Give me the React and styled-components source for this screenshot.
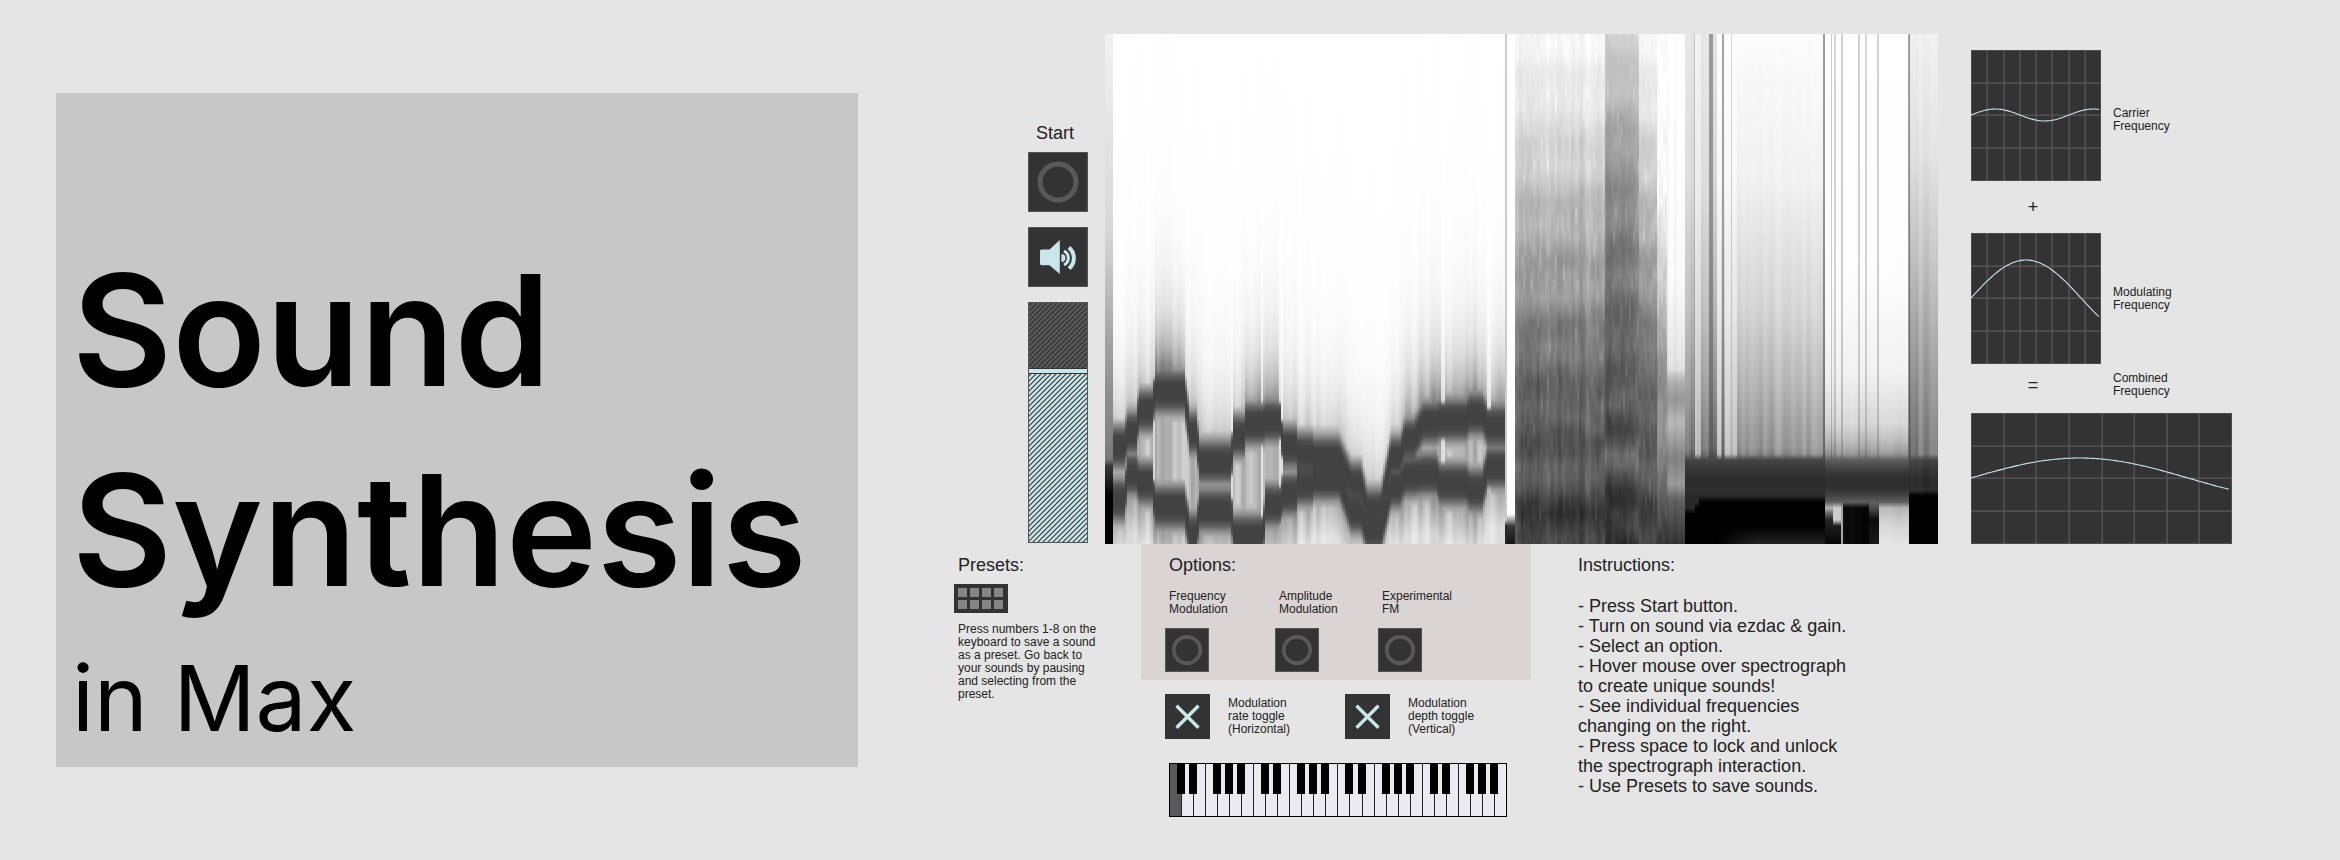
import React, { useMemo, useState } from "react";
import styled, { createGlobalStyle, css } from "styled-components";

const GlobalStyle = createGlobalStyle`
  *, *::before, *::after { box-sizing: border-box; }
  body {
    margin: 0;
    background: #e5e5e5;
    color: #222;
    font-family: "Liberation Sans", Arial, Helvetica, sans-serif;
  }
  h1, h2, p, ul { margin: 0; padding: 0; }
  button { padding: 0; border: 0; font: inherit; cursor: pointer; }
`;

const dark = "#333";
const ring = "#595959";
const accent = "#c9e6ea";

/* ---------- page ---------- */

const Page = styled.main`
  display: grid;
  grid-template-columns: minmax(0, 802fr) minmax(0, 1278fr);
  column-gap: 96px;
  align-items: start;
  padding: 34px 108px 34px 56px;
`;

const TitlePanel = styled.header`
  margin-top: 59px;
  padding: 137px 0 0 16px;
  background: #c7c7c7;
  color: #000;
  font-family: Inter, "Open Sans", sans-serif;
`;

const Title = styled.h1`
  font-size: 154px;
  line-height: 200px;
  font-weight: 600;
`;

const Subtitle = styled.p`
  font-size: 91px;
  line-height: 137px;
`;

const Patch = styled.div`
  display: flex;
  flex-direction: column;
`;

const TopRow = styled.div`
  display: flex;
`;

const BottomRow = styled.div`
  display: flex;
  align-items: flex-start;
`;

const Heading = styled.h2`
  font-size: 18px;
  line-height: 20px;
  font-weight: 400;
`;

const smallText = css`
  font-size: 12px;
  line-height: 13px;
`;

/* ---------- start, dac and gain ---------- */

const Controls = styled.div`
  flex: none;
  width: 134px;
  margin-right: 17px;
  padding-top: 89px;
  display: flex;
  flex-direction: column;
  align-items: flex-end;
  gap: 15px;
`;

const StartGroup = styled.div`
  width: 60px;
  display: flex;
  flex-direction: column;
  align-items: center;
  gap: 9px;
`;

const StartLabel = styled.label`
  font-size: 18px;
  line-height: 20px;
  padding-right: 6px;
`;

const Pad = styled.button`
  display: block;
  width: ${(p) => p.$size}px;
  height: ${(p) => p.$size}px;
  background: ${dark};
  outline: 1px solid #8886;
  outline-offset: -1px;

  svg { display: block; width: 100%; height: 100%; }
`;

const Gain = styled.div`
  position: relative;
  width: 60px;
  height: 241px;

  svg { display: block; width: 100%; height: 100%; }
`;

const GainInput = styled.input`
  position: absolute;
  inset: 0;
  width: 100%;
  height: 100%;
  margin: 0;
  opacity: 0;
  writing-mode: vertical-lr;
  direction: rtl;
`;

function Bang({ size, id, label }) {
  return (
    <Pad type="button" $size={size} id={id} aria-label={label}>
      <svg viewBox="0 0 60 60" aria-hidden="true">
        <circle cx="30" cy="30" r="18" fill="none" stroke={ring} strokeWidth="5" />
      </svg>
    </Pad>
  );
}

function Dac() {
  return (
    <Pad type="button" $size={60} aria-label="Sound on or off">
      <svg viewBox="0 0 60 60" aria-hidden="true">
        <path d="M13.5 22.4 H21.5 L31.8 13 V47 L21.5 38.2 H13.5 Q12 38.2 12 36.5 V24 Q12 22.4 13.5 22.4 Z" fill={accent} />
        <path d="M33.4 27 A4 4 0 0 1 33.4 35 Z" fill={accent} />
        <path d="M36 24 A7.8 7.8 0 0 1 36 38" fill="none" stroke={accent} strokeWidth="3" />
        <path d="M41 20.4 A14 14 0 0 1 41 41.6" fill="none" stroke={accent} strokeWidth="4" />
      </svg>
    </Pad>
  );
}

function GainSlider() {
  const [value, setValue] = useState(72);
  const top = Math.round(241 * (1 - value / 100)) - 1;
  return (
    <Gain>
      <svg viewBox="0 0 60 241" aria-hidden="true">
        <defs>
          <pattern id="hatchOff" width="5" height="5" patternUnits="userSpaceOnUse">
            <rect width="5" height="5" fill="#5b5b5b" />
            <path d="M-1 1 L1 -1 M0 5 L5 0 M4 6 L6 4" stroke="#333" strokeWidth="1.3" />
          </pattern>
          <pattern id="hatchOn" width="5" height="5" patternUnits="userSpaceOnUse">
            <rect width="5" height="5" fill={accent} />
            <path d="M-1 1 L1 -1 M0 5 L5 0 M4 6 L6 4" stroke="#3a3a3a" strokeWidth="1.2" />
          </pattern>
        </defs>
        <rect width="60" height="241" fill="url(#hatchOff)" />
        <rect y={top} width="60" height={241 - top} fill="url(#hatchOn)" />
        <rect y={top} width="60" height="6" fill={dark} />
        <rect y={top + 1} width="60" height="4" fill={accent} />
        <rect x=".5" y=".5" width="59" height="240" fill="none" stroke="#555" />
      </svg>
      <GainInput
        type="range"
        aria-label="Gain"
        min="0"
        max="100"
        value={value}
        onChange={(e) => setValue(Number(e.target.value))}
      />
    </Gain>
  );
}

/* ---------- spectrogram ---------- */

const SpectrogramFrame = styled.div`
  flex: 1;
  min-width: 0;
  height: 510px;
  background: #fff;

  svg { display: block; width: 100%; height: 100%; }
`;

const W = 833;
const H = 510;
const ROW = 12;
const COL = 2;

// [from, to, centre of the upper voice, centre of the lower voice]
const VOICES = [
  [8, 19, 413, 466], [21, 30, 399, 440], [33, 46, 377, 449],
  [49, 78, 358, 473], [84, 91, 399, 500], [93, 125, 428, 476], [128, 138, 402, 502],
  [140, 157, 390, 502], [160, 174, 387, 471], [177, 190, 413, 460], [192, 206, 420, 450],
  [208, 233, 424, 445], [245, 255, 450, 478],
  [261, 275, 476, 497], [285, 294, 424, 453], [299, 308, 406, 442], [317, 331, 389, 440],
  [333, 361, 386, 450], [363, 376, 380, 456], [382, 400, 392, 433],
];

// Bright gaps between partials above the voices.
const GAPS = [[47, 50], [125, 127], [155, 158], [174, 177], [336, 340], [382, 385]];

const hash = (a, b = 0) => {
  const s = Math.sin(a * 127.1 + b * 311.7 + 17.3) * 43758.5453;
  return s - Math.floor(s);
};
const mix = (a, b, t) => a + (b - a) * t;
const clamp = (v) => Math.max(0, Math.min(1, v));
const ramp = (stops, y) => {
  for (let i = 1; i < stops.length; i++) {
    if (y <= stops[i][0]) {
      const [y0, v0] = stops[i - 1];
      const [y1, v1] = stops[i];
      return mix(v0, v1, clamp((y - y0) / (y1 - y0 || 1)));
    }
  }
  return stops[stops.length - 1][1];
};
const within = (x, a, b) => x >= a && x < b;
const soft = (x) => (hash(x - 2) + 2 * hash(x) + hash(x + 2)) / 4;

function voicesAt(x) {
  for (let i = 0; i < VOICES.length; i++) {
    const [a, b, u, l] = VOICES[i];
    if (x < a) {
      const p = VOICES[i - 1];
      const t = clamp((x - p[1]) / (a - p[1]));
      return [mix(p[2], u, t), mix(p[3], l, t)];
    }
    if (x <= b) return [u, l];
  }
  return [392, 433];
}

const BAND = [[0, 0.745], [11, 0.73], [16, 0.63], [21, 0.46], [25, 0.34], [29, 0.26]];

function voiceShade(x, y) {
  const [u, l] = voicesAt(x);
  const n = soft(x);
  const gap = GAPS.some(([a, b]) => within(x, a, b));
  const du = Math.abs(y - u);
  const dl = Math.abs(y - l);
  const reach = gap ? 20 : 29;
  const core = Math.max(du < reach ? ramp(BAND, du) : 0, dl < reach ? ramp(BAND, dl) : 0);
  let v;
  if (y < u) {
    const glow = within(x, 48, 79) ? 0.42 : within(x, 299, 400) || within(x, 139, 175) ? 0.34 : 0.2;
    v = glow * Math.exp(-Math.max(0, du - 24) / 38) * (0.7 + 0.6 * n);
    v += 0.08 * Math.exp(-(u - y) / 110) * n;
    if (gap) v *= 0.3;
  } else if (y > l) {
    v = mix(0.34, 0.13, clamp((dl - 24) / 36)) * (0.5 + 0.9 * n);
  } else {
    v = 0.3 * (0.45 + 0.9 * n) * (gap ? 0.4 : 1);
  }
  return Math.max(core, v);
}

function noiseShade(x, y) {
  const n = soft(x);
  const row = Math.round(y / ROW);
  const cell = hash(x, row);
  const patch = hash(Math.floor((x + (row % 3) * 9) / 28), Math.floor(row / 2));
  const peak = within(x, 500, 534);
  const wave = Math.cos(((y - (peak ? 32 : 46)) / 61) * 2 * Math.PI);
  let v = ramp([[0, 0.04], [70, 0.1], [130, 0.19], [200, 0.32], [260, 0.42], [320, 0.56], [400, 0.66], [430, 0.64], [460, 0.7], [475, 0.78], [510, 0.76]], y);
  if (peak) v = ramp([[0, 0.18], [60, 0.25], [120, 0.38], [200, 0.48], [300, 0.58], [400, 0.68], [425, 0.56], [455, 0.74], [510, 0.8]], y);
  if (x < 416) v *= 0.92;
  const amount = 0.35 + 0.65 * clamp(y / 200);
  v += (wave * 0.035 + (n - 0.5) * 0.13 + (cell - 0.5) * 0.07 + (patch - 0.5) * 0.04) * amount;
  if (cell > 0.965) v -= 0.12 * amount;
  return v;
}

const LINES = [
  [589, 1, 0.2], [604, 4, 0.42], [617, 2, 0.42], [626, 1, 0.2], [718, 2, 0.47],
  [726, 1, 0.24], [729, 2, 0.2], [736, 2, 0.24], [753, 2, 0.22], [760, 2, 0.2],
  [772, 2, 0.22], [803, 2, 0.45],
];

function shade(x, y) {
  if (x < 8) return ramp([[0, 0.05], [200, 0.16], [330, 0.4], [425, 0.52], [432, 0.78], [450, 0.9], [463, 1]], y);
  if (x < 400) return voiceShade(x, y);
  if (x < 402) return y > 486 ? 0.85 : 0.2;
  if (x < 409) return ramp([[0, 0], [484, 0], [488, 0.75], [510, 0.92]], y);
  if (x < 552) return noiseShade(x, y);
  if (x < 561) return ramp([[0, 0], [150, 0.02], [260, 0.22], [340, 0.45], [400, 0.42], [460, 0.6], [510, 0.8]], y) + (hash(x, Math.round(y / ROW)) - 0.5) * 0.08;
  if (x < 579) return ramp([[0, 0], [250, 0.03], [335, 0.12], [345, 0.3], [365, 0.42], [388, 0.28], [425, 0.5], [450, 0.4], [465, 0.62], [510, 0.8]], y) + (hash(x) - 0.5) * 0.04;
  const n = soft(x);
  const bar = [[425, 0.72], [434, 0.78], [449, 0.84], [460, 0.8]];
  if (x < 719) {
    if (y >= 425) {
      if (y <= 460) return ramp(bar, y);
      const start = x < 589 ? 478 : x < 594 ? 474 : 464;
      const lift = clamp((x - 610) / 40) * ramp([[492, 0], [510, 0.14]], y);
      return y >= start ? 1 - lift : 0.84;
    }
    const left = x < 611 ? 0.08 : 0;
    const bright = within(x, 589, 595) || within(x, 611, 616) || within(x, 619, 632);
    const v = ramp([[0, 0.015], [150, 0.06], [280, 0.18], [350, 0.3], [425, 0.46]], y) + left;
    return v * (0.72 + 0.5 * n) * (bright ? 0.5 : 1) * (y > 415 ? 1.1 : 1);
  }
  if (x < 803) {
    if (y < 425) return ramp([[0, 0], [240, 0.01], [340, 0.05], [390, 0.15], [410, 0.28], [425, 0.46]], y) * (0.9 + 0.25 * n);
    if (y < 474) return ramp([[425, 0.62], [440, 0.8], [454, 0.83], [466, 0.68], [474, 0.5]], y);
    if (x < 735) return x < 727 || y > 486 ? ramp([[474, 0.3], [484, 0.85], [510, 0.98]], y) : 0.2;
    if (x < 738) return 0.35;
    if (x < 764) return 0.94 + 0.06 * n;
    if (x < 773) return ramp([[474, 0.7], [486, 0.96], [510, 0.9]], y);
    return ramp([[474, 0.3], [490, 0.18], [510, 0.11]], y) * (0.8 + 0.3 * n);
  }
  if (y >= 425) return y < 460 ? ramp(bar, y) + 0.05 * (n - 0.5) : 1;
  return ramp([[0, 0.06], [120, 0.12], [220, 0.24], [330, 0.4], [425, 0.55]], y) * (0.8 + 0.4 * n) * (x > 812 ? 0.9 : 1.1);
}

const gray = (v) => {
  const c = Math.round(255 * (1 - clamp(v)));
  return `rgb(${c},${c},${c})`;
};

function buildColumns() {
  const columns = [];
  for (let x = 0; x < W; x += COL) {
    const step = within(x, 409, 561) ? ROW : 6;
    const stops = [];
    for (let y = 0; y < H; y += step) stops.push([y, gray(shade(x, y))]);
    stops.push([H, gray(shade(x, H))]);
    columns.push({
      x,
      stops: stops.filter(
        (s, i) => i === 0 || i === stops.length - 1 || s[1] !== stops[i - 1][1] || s[1] !== stops[i + 1][1]
      ),
    });
  }
  return columns;
}

function Spectrogram() {
  const columns = useMemo(buildColumns, []);
  return (
    <SpectrogramFrame>
      <svg viewBox={`0 0 ${W} ${H}`} preserveAspectRatio="none" role="img" aria-label="Spectrogram" shapeRendering="crispEdges">
        <defs>
          {columns.map((c) => (
            <linearGradient key={c.x} id={`col${c.x}`} gradientUnits="userSpaceOnUse" x1="0" y1="0" x2="0" y2={H}>
              {c.stops.map(([y, color], i) => (
                <stop key={i} offset={y / H} stopColor={color} />
              ))}
            </linearGradient>
          ))}
        </defs>
        {columns.map((c) => (
          <rect key={c.x} x={c.x} width={Math.min(COL, W - c.x)} height={H} fill={`url(#col${c.x})`} />
        ))}
        {LINES.map(([x, w, o]) => (
          <rect key={x} x={x} width={w} height="425" fill="#333" opacity={o} />
        ))}
      </svg>
    </SpectrogramFrame>
  );
}

/* ---------- scopes ---------- */

const Scopes = styled.div`
  flex: none;
  width: 261px;
  margin-left: 33px;
  padding-top: 16px;
`;

const ScopeRow = styled.div`
  display: flex;
  align-items: center;
  gap: 12px;
`;

const ScopeBox = styled.svg`
  display: block;
  flex: none;
  width: ${(p) => p.$width}px;
  height: 131px;
  background: ${dark};
`;

const ScopeLabel = styled.p`
  ${smallText}
  padding-top: ${(p) => p.$drop || 0}px;
`;

const OperatorRow = styled.div`
  display: flex;
  align-items: center;
  gap: 18px;
  height: ${(p) => p.$height}px;
  padding-bottom: ${(p) => p.$lift || 0}px;
`;

const Operator = styled.span`
  width: 124px;
  text-align: center;
  font-size: 18px;
  line-height: 20px;
`;

function Scope({ width, amp, period, label }) {
  const points = [];
  for (let x = 0; x <= width - 2; x += 2) {
    points.push(`${x},${(65 - amp * Math.sin((2 * Math.PI * x) / period)).toFixed(1)}`);
  }
  return (
    <ScopeBox $width={width} viewBox={`0 0 ${width} 131`} role="img" aria-label={label}>
      {[1, 2, 3, 4, 5, 6, 7].map((i) => (
        <rect key={i} x={Math.round((width * i) / 8) - 0.5} width="1.3" height="131" fill="#575757" />
      ))}
      {[1, 2, 3].map((i) => (
        <rect key={i} y={Math.round((130 * i) / 4) - 0.5} width={width} height="1.3" fill="#575757" />
      ))}
      <rect x=".5" y=".5" width={width - 1} height="130" fill="none" stroke="#6668" />
      <polyline points={points.join(" ")} fill="none" stroke={accent} strokeWidth="1.1" />
    </ScopeBox>
  );
}

/* ---------- presets ---------- */

const Presets = styled.section`
  flex: none;
  width: 150px;
  margin-right: 37px;
  padding-top: 11px;

  h2, p { padding-left: 4px; }
`;

const PresetGrid = styled.div`
  display: grid;
  grid-template-columns: repeat(4, 9px);
  grid-auto-rows: 9px;
  gap: 3px;
  width: 54px;
  margin: 9px 0 10px;
  padding: 4px;
  background: ${dark};
`;

const PresetSlot = styled.button`
  background: #858585;
`;

const PresetText = styled.p`
  ${smallText}
`;

/* ---------- options ---------- */

const Middle = styled.div`
  flex: none;
  width: 390px;
  margin-right: 47px;
`;

const Options = styled.section`
  padding: 11px 24px 8px;
  border-radius: 0 0 4px 4px;
  background: #dad4d4;

  h2 { padding-left: 4px; }
`;

const OptionGrid = styled.div`
  display: grid;
  grid-template-columns: 110px 103px auto;
  margin-top: 15px;
`;

const OptionItem = styled.div`
  display: flex;
  flex-direction: column;
  gap: 12px;
`;

const OptionLabel = styled.label`
  ${smallText}
  padding-left: 4px;
`;

const Toggles = styled.div`
  display: grid;
  grid-template-columns: 180px auto;
  padding: 14px 24px 0;
`;

const ToggleLabel = styled.label`
  ${smallText}
  display: flex;
  align-items: center;
  gap: 18px;
  cursor: pointer;
`;

const ToggleBox = styled.span`
  position: relative;
  width: 45px;
  height: 45px;
  background: ${dark};

  svg { display: block; width: 100%; height: 100%; }
  input:not(:checked) + svg path { stroke: ${ring}; }
`;

const ToggleInput = styled.input`
  position: absolute;
  inset: 0;
  width: 100%;
  height: 100%;
  margin: 0;
  opacity: 0;
`;

function Toggle({ children }) {
  return (
    <ToggleLabel>
      <ToggleBox>
        <ToggleInput type="checkbox" defaultChecked />
        <svg viewBox="0 0 45 45" aria-hidden="true">
          <path d="M11.5 11.8 L33.5 33.8 M33.5 11.8 L11.5 33.8" stroke={accent} strokeWidth="3.4" />
        </svg>
      </ToggleBox>
      <span>{children}</span>
    </ToggleLabel>
  );
}

/* ---------- keyboard ---------- */

const Keyboard = styled.div`
  display: flex;
  width: 338px;
  height: 54px;
  margin: 24px 0 0 28px;
  border: 1px solid #000;
`;

const KeySlot = styled.div`
  position: relative;
  flex: 1;
  border-right: 1px solid #222;

  &:last-child { border-right: 0; }
`;

const WhiteKey = styled.button`
  display: block;
  width: 100%;
  height: 100%;
  background: ${(p) => (p.$held ? "#595959" : "#ebeaf0")};
`;

const BlackKey = styled.button`
  position: absolute;
  z-index: 1;
  top: 0;
  right: -4px;
  width: 8px;
  height: 30px;
  background: #000;
`;

const NOTES = ["C", "D", "E", "F", "G", "A", "B"];

function Piano() {
  return (
    <Keyboard role="group" aria-label="Keyboard">
      {Array.from({ length: 28 }, (_, i) => {
        const note = NOTES[i % 7];
        const octave = 2 + Math.floor(i / 7);
        return (
          <KeySlot key={i}>
            <WhiteKey type="button" $held={i === 0} aria-label={`${note}${octave}`} />
            {note !== "E" && note !== "B" && <BlackKey type="button" aria-label={`${note} sharp ${octave}`} />}
          </KeySlot>
        );
      })}
    </Keyboard>
  );
}

/* ---------- instructions ---------- */

const Instructions = styled.section`
  flex: 0 1 280px;
  padding-top: 11px;
`;

const Steps = styled.ul`
  margin-top: 21px;
  list-style: none;
  font-size: 18px;
  line-height: 20px;
`;

const STEPS = [
  "Press Start button.",
  "Turn on sound via ezdac & gain.",
  "Select an option.",
  "Hover mouse over spectrograph to create unique sounds!",
  "See individual frequencies changing on the right.",
  "Press space to lock and unlock the spectrograph interaction.",
  "Use Presets to save sounds.",
];

export default function App() {
  return (
    <>
      <GlobalStyle />
      <Page>
        <TitlePanel>
          <Title>
            Sound
            <br />
            Synthesis
          </Title>
          <Subtitle>in Max</Subtitle>
        </TitlePanel>
        <Patch>
          <TopRow>
            <Controls>
              <StartGroup>
                <StartLabel htmlFor="start">Start</StartLabel>
                <Bang size={60} id="start" />
              </StartGroup>
              <Dac />
              <GainSlider />
            </Controls>
            <Spectrogram />
            <Scopes>
              <ScopeRow>
                <Scope width={130} amp={6} period={98} label="Carrier wave" />
                <ScopeLabel $drop={8}>Carrier<br />Frequency</ScopeLabel>
              </ScopeRow>
              <OperatorRow $height={52}>
                <Operator>+</Operator>
              </OperatorRow>
              <ScopeRow>
                <Scope width={130} amp={38} period={220} label="Modulating wave" />
                <ScopeLabel>Modulating<br />Frequency</ScopeLabel>
              </ScopeRow>
              <OperatorRow $height={49} $lift={8}>
                <Operator>=</Operator>
                <ScopeLabel>Combined<br />Frequency</ScopeLabel>
              </OperatorRow>
              <Scope width={261} amp={20} period={434} label="Combined wave" />
            </Scopes>
          </TopRow>
          <BottomRow>
            <Presets>
              <Heading>Presets:</Heading>
              <PresetGrid>
                {[1, 2, 3, 4, 5, 6, 7, 8].map((n) => (
                  <PresetSlot key={n} type="button" aria-label={`Preset ${n}`} />
                ))}
              </PresetGrid>
              <PresetText>
                Press numbers 1-8 on the keyboard to save a sound as a preset. Go back to your sounds by pausing and
                selecting from the preset.
              </PresetText>
            </Presets>
            <Middle>
              <Options>
                <Heading>Options:</Heading>
                <OptionGrid>
                  <OptionItem>
                    <OptionLabel htmlFor="fm">Frequency<br />Modulation</OptionLabel>
                    <Bang size={44} id="fm" />
                  </OptionItem>
                  <OptionItem>
                    <OptionLabel htmlFor="am">Amplitude<br />Modulation</OptionLabel>
                    <Bang size={44} id="am" />
                  </OptionItem>
                  <OptionItem>
                    <OptionLabel htmlFor="xfm">Experimental<br />FM</OptionLabel>
                    <Bang size={44} id="xfm" />
                  </OptionItem>
                </OptionGrid>
              </Options>
              <Toggles>
                <Toggle>Modulation<br />rate toggle<br />(Horizontal)</Toggle>
                <Toggle>Modulation<br />depth toggle<br />(Vertical)</Toggle>
              </Toggles>
              <Piano />
            </Middle>
            <Instructions>
              <Heading>Instructions:</Heading>
              <Steps>
                {STEPS.map((step) => (
                  <li key={step}>- {step}</li>
                ))}
              </Steps>
            </Instructions>
          </BottomRow>
        </Patch>
      </Page>
    </>
  );
}
